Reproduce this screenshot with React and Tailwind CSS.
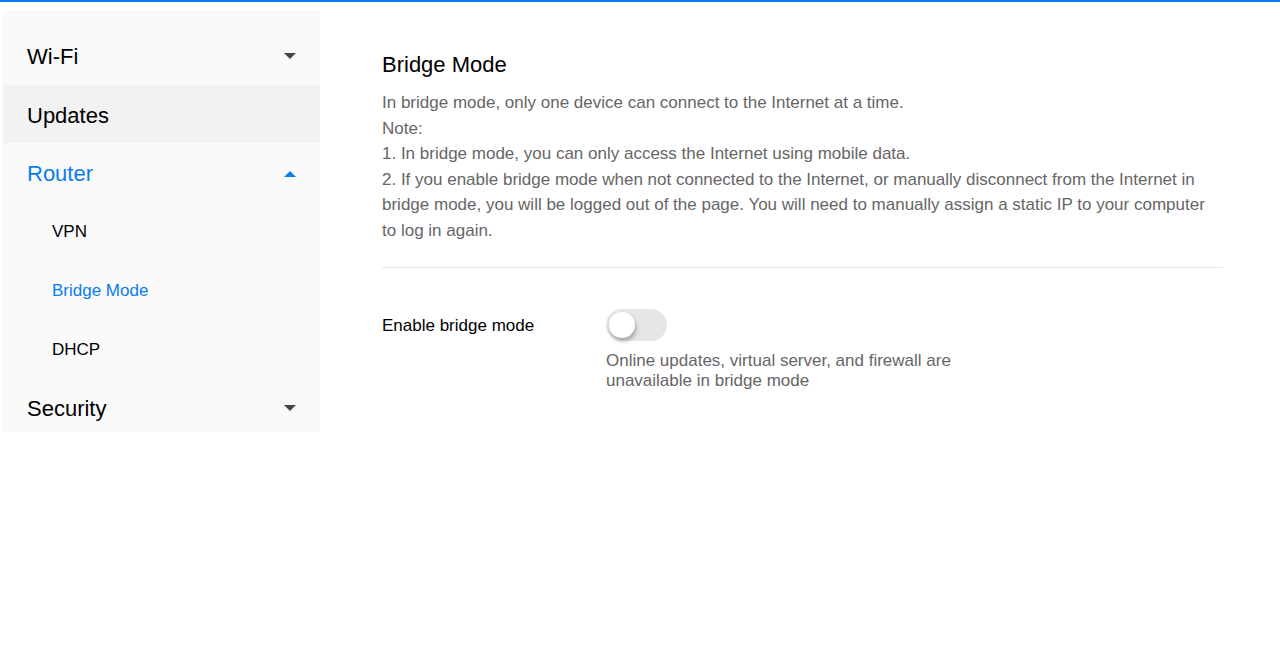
export default function App() {
  const Caret = ({ dir, blue }) => (
    <svg width="12" height="7" viewBox="0 0 12 7" className={blue ? 'text-[#0a7cf0]' : 'text-[#444]'}>
      {dir === 'down' ? <path d="M0 0h12L6 6z" fill="currentColor" /> : <path d="M0 7h12L6 1z" fill="currentColor" />}
    </svg>
  )

  return (
    <div className="min-h-[669px] bg-white font-['Liberation_Sans',Arial,sans-serif] border-t-2 border-[#0a7cf0]">
      <div className="flex items-start">
        {/* Sidebar */}
        <div className="ml-[3px] mt-[8px] w-[317px] bg-[#fafafa] pt-[17px]">
          <div className="flex h-[58px] items-center justify-between pl-[24px] pr-[24px]">
            <span className="text-[22px] text-black">Wi-Fi</span>
            <Caret dir="down" />
          </div>
          <div className="flex h-[58px] items-center bg-[#f2f2f2] pl-[24px] pt-[2px]">
            <span className="text-[22px] text-black">Updates</span>
          </div>
          <div className="flex h-[59px] items-center justify-between pl-[24px] pr-[24px] pt-[2px]">
            <span className="text-[22px] text-[#0a7cf0]">Router</span>
            <Caret dir="up" blue />
          </div>
          <div className="flex h-[59px] items-center pl-[49px] text-[17px] text-black">VPN</div>
          <div className="flex h-[59px] items-center pl-[49px] text-[17px] text-[#0a7cf0]">Bridge Mode</div>
          <div className="flex h-[59px] items-center pl-[49px] text-[17px] text-black">DHCP</div>
          <div className="flex h-[53px] items-center justify-between pl-[24px] pr-[24px] pt-[6px]">
            <span className="text-[22px] text-black">Security</span>
            <Caret dir="down" />
          </div>
        </div>

        {/* Main */}
        <div className="flex-1 pl-[62px] pr-[57px] pt-[50px]">
          <h1 className="text-[22px] leading-[26px] text-black">Bridge Mode</h1>
          <div className="mt-[12px] text-[17px] leading-[25.5px] text-[#666]">
            <p>In bridge mode, only one device can connect to the Internet at a time.</p>
            <p>Note:</p>
            <p>1. In bridge mode, you can only access the Internet using mobile data.</p>
            <p>
              2. If you enable bridge mode when not connected to the Internet, or manually disconnect from the Internet in
              bridge mode, you will be logged out of the page. You will need to manually assign a static IP to your computer
              to log in again.
            </p>
          </div>
          <div className="mt-[24px] border-t border-[#e8e8e8]" />

          <div className="mt-[41px] flex items-start">
            <div className="w-[224px] pt-[7px] text-[17px] leading-[20px] text-black">Enable bridge mode</div>
            <div>
              <div className="relative h-[32px] w-[61px] rounded-full bg-[#e6e6e6]">
                <div className="absolute left-[3px] top-[3px] h-[26px] w-[26px] rounded-full bg-white shadow-[1px_3px_4px_rgba(0,0,0,0.3)]" />
              </div>
              <p className="mt-[10px] w-[380px] text-[17px] leading-[20px] text-[#666]">
                Online updates, virtual server, and firewall are unavailable in bridge mode
              </p>
            </div>
          </div>
        </div>
      </div>
    </div>
  )
}
